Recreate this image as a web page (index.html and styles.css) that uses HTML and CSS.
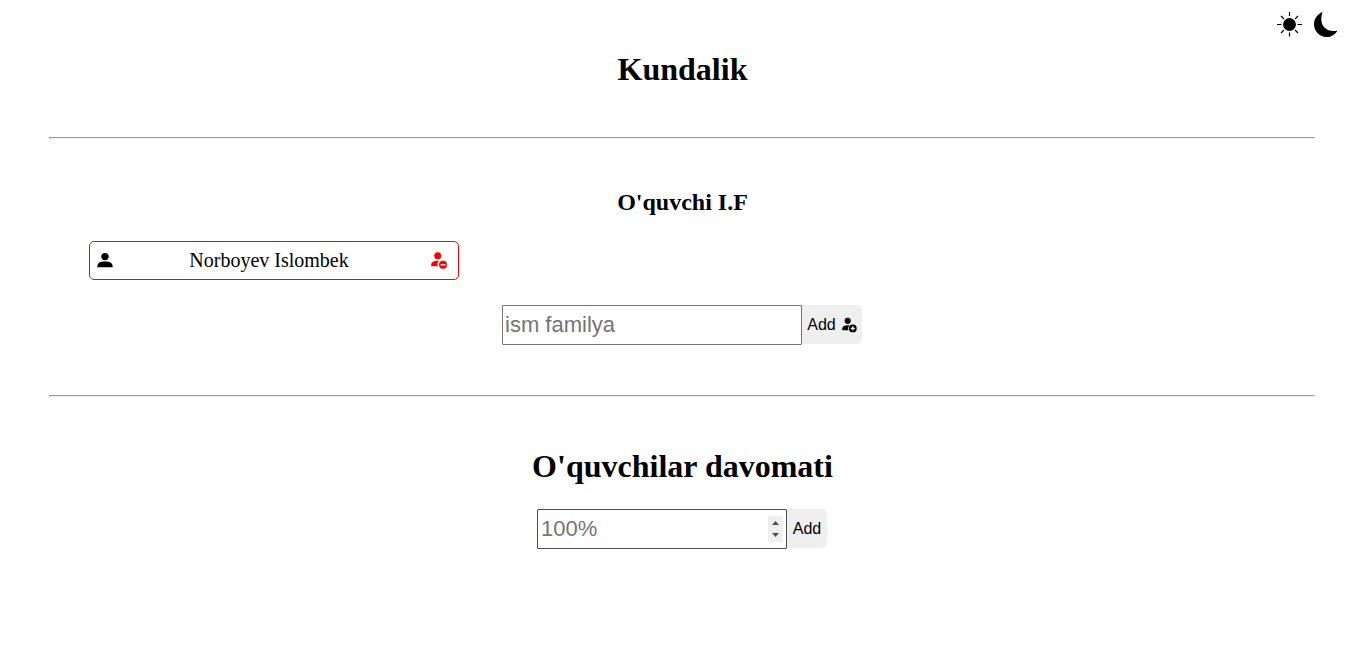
FILE: index.html
```html
<!DOCTYPE html>
<html lang="uz">
<head>
<meta charset="utf-8">
<title>Kundalik</title>
<link rel="stylesheet" href="styles.css">
</head>
<body>
<div class="theme">
  <svg class="sun" viewBox="0 0 26 26"><circle cx="12.500" cy="12.500" r="6.400"/><path d="M12.500 0v4M12.500 20.500v4M0 12.500h4.500M20.500 12.500H25M4 4l3 3M18 18l3 3M4 21l3-3M18 7l3-3" fill="none" stroke="#000" stroke-width="1.200"/></svg>
  <svg class="moon" viewBox="0 0 26 26"><path d="M9.700 0C4.500 2 1 6.700 1 12.300 1 19.300 6.500 25 13.500 25c4.800 0 9-2.600 11-6.600-1.500.5-2.800.7-4.200.7C13.300 19.100 8.300 14 8.300 7.300c0-2.700.4-5 1.400-7.300z"/></svg>
</div>
<main class="page">
  <h1 class="title">Kundalik</h1>
  <hr class="rule">
  <section class="students">
    <h2 class="subtitle">O'quvchi I.F</h2>
    <div class="student">
      <svg class="icon" viewBox="0 0 16 16"><circle cx="8" cy="3.600" r="3.700"/><path d="M.4 14.200v-1C.4 10 3.500 8.600 8 8.600s7.600 1.400 7.600 4.600v1z"/></svg>
      <span class="name">Norboyev Islombek</span>
      <svg class="icon remove" viewBox="0 0 16 16"><circle cx="6.700" cy="2.800" r="3.500"/><path d="M.2 13.200v-1.500c0-2.500 2.600-4 6.500-4h1.300a5 5 0 0 0-1 5.500z"/><circle cx="12" cy="11.800" r="4"/><path class="cut" d="M9.600 11.100h4.800v1.400H9.600z"/></svg>
    </div>
    <form class="row">
      <input class="field wide" type="text" placeholder="ism familya">
      <button class="add with-icon" type="button">Add <svg class="plus" viewBox="0 0 16 16"><circle cx="6.700" cy="3.800" r="3.100"/><path d="M1.200 13.200v-1.300c0-2.300 2.300-3.700 5.500-3.700h1.600a5 5 0 0 0-.8 5z"/><circle cx="11.800" cy="11.400" r="3.900"/><path class="cut" d="M11.100 9.300h1.400v1.400h1.400v1.400h-1.400v1.400h-1.400v-1.400H9.700v-1.400h1.400z"/></svg></button>
    </form>
  </section>
  <hr class="rule">
  <section class="attendance">
    <h1 class="title">O'quvchilar davomati</h1>
    <form class="row">
      <div class="number">
        <input class="field" type="text" inputmode="numeric" placeholder="100%">
        <svg class="spin" viewBox="0 0 15 26"><path d="M4 9l3.500-4L11 9zM4 17l3.500 4L11 17z"/></svg>
      </div>
      <button class="add" type="button">Add</button>
    </form>
  </section>
</main>
</body>
</html>
```
FILE: styles.css
```css
* { box-sizing: border-box; margin: 0; padding: 0; }
body { background: #fff; color: #000; font-family: "Liberation Serif", "Times New Roman", serif; }
.theme { position: absolute; top: 12px; right: 19px; display: flex; gap: 10px; }
.sun, .moon { display: block; width: 26px; height: 26px; overflow: visible; }
.page { padding: 50px 43px 0 49px; }
.title { height: 37px; font-size: 32px; line-height: 39px; text-align: center; padding-left: 1px; }
.subtitle { font-size: 24px; line-height: 27px; text-align: center; padding-left: 1px; }
.rule { margin: 50px 0; border: 1px solid; border-color: #9a9a9a #eee #eee #9a9a9a; height: 2px; }
.student { display: flex; align-items: center; justify-content: space-between; width: 370px; height: 39px; margin: 25px 0 25px 40px; padding: 0 11px 0 7px; border: 1px solid #f00; border-radius: 5px; font-size: 20px; }
.name { margin-right: 6px; }
.icon { width: 16px; height: 16px; overflow: visible; }
.remove { fill: #f00; }
.cut { fill: #fff; }
.row { display: flex; justify-content: center; align-items: flex-start; }
.field { display: block; width: 250px; height: 40px; padding: 1px 3px; border: 1px solid #4f4f4f; border-radius: 1px; background: #fff; font: 22px "Liberation Sans", Arial, sans-serif; }
.wide { width: 300px; border-color: #767676; padding: 1px 2px; }
.field::placeholder { color: #757575; opacity: 1; }
.number { position: relative; }
.spin { position: absolute; right: 4px; top: 7px; width: 15px; height: 26px; background: #efefef; fill: #505050; }
.add { display: flex; align-items: center; justify-content: center; width: 40px; height: 39px; border: 0; border-radius: 0 5px 5px 0; background: #efefef; color: #000; font: 16px "Liberation Sans", Arial, sans-serif; }
.with-icon { width: 60px; gap: 5px; }
.plus { width: 16px; height: 16px; }
.plus .cut { fill: #efefef; }
.attendance .row { margin-top: 25px; }
```
